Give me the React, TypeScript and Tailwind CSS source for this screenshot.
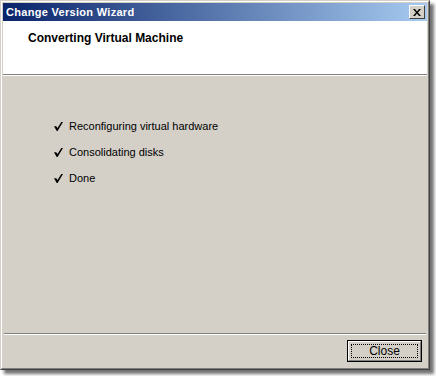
const steps = ["Reconfiguring virtual hardware", "Consolidating disks", "Done"]

function Tick() {
  return (
    <svg width="9" height="9" viewBox="0 0 9 9" className="shrink-0">
      <path d="M0 4.2h2.2l1.3 1.9L7.3 0H9L3.6 9H2.7z" fill="#000" />
    </svg>
  )
}

export default function App() {
  return (
    <div className="w-[436px] h-[376px] bg-white font-['Liberation_Sans',sans-serif] text-[11px] text-black">
      <div className="w-[430px] h-[370px] flex flex-col bg-[#d4d0c8] border-t border-l border-t-[#d4d0c8] border-l-[#d4d0c8] border-r border-b border-r-[#404040] border-b-[#404040] shadow-[4px_4px_3px_rgba(0,0,0,0.55)]">
        <div className="flex-1 flex flex-col border-t border-l border-t-white border-l-white border-r border-b border-r-[#808080] border-b-[#808080] p-[1px]">
          {/* title bar */}
          <div className="h-[18px] flex items-center justify-between pl-[3px] pr-[2px] bg-[linear-gradient(to_right,#0a246a,#a6caf0)]">
            <span className="font-bold text-white text-[11px] tracking-[0.3px]">
              Change Version Wizard
            </span>
            <div className="w-[16px] h-[14px] flex items-center justify-center bg-[#d4d0c8] border border-t-white border-l-white border-r-[#404040] border-b-[#404040]">
              <svg width="8" height="7" viewBox="0 0 8 7">
                <path d="M0 0h2l2 2.5L6 0h2L5 3.5 8 7H6L4 4.5 2 7H0l3-3.5z" fill="#000" />
              </svg>
            </div>
          </div>

          {/* header */}
          <div className="h-[54px] bg-white border-b border-b-[#808080] pl-[25px] pt-[8px]">
            <span className="font-bold text-[12px]">Converting Virtual Machine</span>
          </div>
          <div className="h-px bg-white" />

          {/* body */}
          <div className="flex-1 flex flex-col gap-[10px] pl-[51px] pt-[42px]">
            {steps.map((s) => (
              <div key={s} className="flex items-center gap-[6px] h-[16px]">
                <Tick />
                <span>{s}</span>
              </div>
            ))}
          </div>

          {/* footer */}
          <div className="h-px bg-[#808080] mx-[1px]" />
          <div className="h-px bg-white mx-[1px]" />
          <div className="h-[32px] flex items-start justify-end pr-[5px] pt-[5px]">
            <button className="w-[75px] h-[22px] border border-black bg-[#d4d0c8] p-0">
              <div className="w-full h-full border border-t-white border-l-white border-r-[#808080] border-b-[#808080] p-[2px]">
                <div className="w-full h-full border border-dotted border-black flex items-center justify-center text-[12px]">
                  Close
                </div>
              </div>
            </button>
          </div>
        </div>
      </div>
    </div>
  )
}
